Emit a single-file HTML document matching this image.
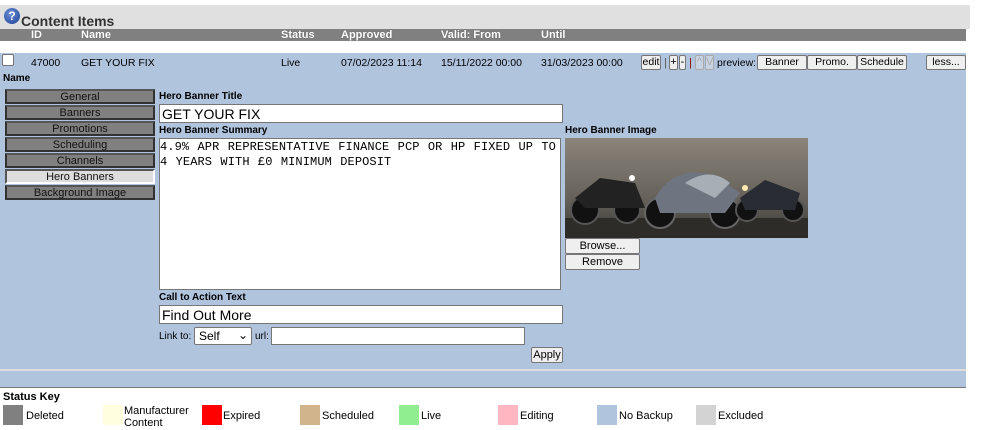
<!DOCTYPE html>
<html><head><style>
*{box-sizing:border-box}
body{margin:0;width:1001px;height:430px;background:#fff;font-family:"Liberation Sans",Arial,sans-serif;font-size:11px;position:relative;overflow:hidden;color:#000}
.a{position:absolute}
.tab{position:absolute;left:5px;width:150px;height:15px;background:#808080;border:2px solid #333;border-top-color:#555;text-align:center;font-size:11px;line-height:12px;color:#111}
.btn{position:absolute;background:#efefef;border:1px solid #767676;border-radius:2px;font-size:11px;text-align:center;line-height:12px}
.inp{position:absolute;background:#fff;border:1px solid #767676}
.sw{position:absolute;top:405px;width:20px;height:20px}
.kl{position:absolute;top:410px;font-size:11px}
</style></head><body>
<div class="a" style="left:0;top:5px;width:970px;height:24px;background:#e0e0e0"></div>
<div class="a" style="left:4px;top:8px;width:16px;height:16px;border-radius:50%;background:radial-gradient(circle at 40% 35%,#6b8fd6,#1d3f95);color:#fff;font-weight:bold;font-size:12px;text-align:center;line-height:16px">?</div>
<div class="a" style="left:21px;top:13px;font-weight:bold;font-size:14px;color:#333">Content Items</div>
<div class="a" style="left:0;top:29px;width:966px;height:12px;background:#808080;color:#fff;font-weight:bold;font-size:11px;line-height:12px;text-shadow:0 0 1px #555">
<span class="a" style="left:31px">ID</span><span class="a" style="left:81px">Name</span><span class="a" style="left:281px">Status</span><span class="a" style="left:341px">Approved</span><span class="a" style="left:441px">Valid: From</span><span class="a" style="left:541px">Until</span></div>
<div class="a" style="left:0;top:53px;width:966px;height:316px;background:#b0c4de"></div>
<div class="a" style="left:0;top:369px;width:966px;height:2px;background:#ddd"></div>
<div class="a" style="left:0;top:371px;width:966px;height:16px;background:#b0c4de"></div>
<div class="a" style="left:0;top:387px;width:966px;height:1px;background:#777"></div>
<div class="a" style="left:2px;top:54px;width:12px;height:12px;background:#fff;border:1px solid #767676;border-radius:2px"></div>
<div class="a" style="left:31px;top:57px;font-size:10.5px">47000</div>
<div class="a" style="left:81px;top:57px;font-size:10.5px">GET YOUR FIX</div>
<div class="a" style="left:281px;top:57px;font-size:10.5px">Live</div>
<div class="a" style="left:341px;top:57px;font-size:10.5px">07/02/2023 11:14</div>
<div class="a" style="left:441px;top:57px;font-size:10.5px">15/11/2022 00:00</div>
<div class="a" style="left:541px;top:57px;font-size:10.5px">31/03/2023 00:00</div>
<div class="btn" style="left:641px;top:55px;width:20px;height:15px;font-size:10.5px">edit</div>
<div class="a" style="left:664px;top:57px;color:#555">|</div>
<div class="btn" style="left:669px;top:55px;width:9px;height:15px">+</div>
<div class="btn" style="left:679px;top:55px;width:7px;height:15px">-</div>
<div class="a" style="left:689px;top:57px;color:#800">|</div>
<div class="btn" style="left:695px;top:55px;width:9px;height:15px;color:#aaa;border-color:#aaa;background:#c8d4e4">^</div>
<div class="btn" style="left:705px;top:55px;width:9px;height:15px;color:#aaa;border-color:#aaa;background:#c8d4e4">V</div>
<div class="a" style="left:717px;top:57px;font-size:10.5px">preview:</div>
<div class="btn" style="left:757px;top:55px;width:50px;height:15px;font-size:10.5px">Banner</div>
<div class="btn" style="left:807px;top:55px;width:50px;height:15px;font-size:10.5px">Promo.</div>
<div class="btn" style="left:857px;top:55px;width:50px;height:15px;font-size:10.5px">Schedule</div>
<div class="btn" style="left:926px;top:55px;width:40px;height:15px;font-size:10.5px">less...</div>
<div class="a" style="left:3px;top:73px;font-weight:bold;font-size:10px">Name</div>
<div class="tab" style="top:89px">General</div>
<div class="tab" style="top:105px">Banners</div>
<div class="tab" style="top:121px">Promotions</div>
<div class="tab" style="top:137px">Scheduling</div>
<div class="tab" style="top:153px">Channels</div>
<div class="tab" style="top:169px;background:#ddd;border-color:#555 #fff #fff #555">Hero Banners</div>
<div class="tab" style="top:185px">Background Image</div>
<div class="a" style="left:159px;top:91px;font-weight:bold;font-size:10px">Hero Banner Title</div>
<div class="inp" style="left:159px;top:104px;width:404px;height:19px;font-size:14px;padding:1px 2px">GET YOUR FIX</div>
<div class="a" style="left:159px;top:125px;font-weight:bold;font-size:10px">Hero Banner Summary</div>
<div class="inp" style="left:159px;top:138px;width:402px;height:152px;font-family:'Liberation Mono',monospace;font-size:12px;line-height:15px;padding:1px 0;letter-spacing:0.1px;word-spacing:1px">4.9% APR REPRESENTATIVE FINANCE PCP OR HP FIXED UP TO<br>4 YEARS WITH £0 MINIMUM DEPOSIT</div>
<div class="a" style="left:159px;top:292px;font-weight:bold;font-size:10px">Call to Action Text</div>
<div class="inp" style="left:159px;top:305px;width:404px;height:19px;font-size:14px;padding:1px 2px">Find Out More</div>
<div class="a" style="left:159px;top:331px;font-size:10px">Link to:</div>
<div class="inp" style="left:194px;top:327px;width:58px;height:18px;font-size:12px;padding:1px 4px;border-radius:2px">Self<span style="position:absolute;right:3px;top:0">⌄</span></div>
<div class="a" style="left:255px;top:331px;font-size:10px">url:</div>
<div class="inp" style="left:271px;top:327px;width:254px;height:18px"></div>
<div class="btn" style="left:531px;top:347px;width:32px;height:16px;line-height:14px;font-size:11px">Apply</div>
<div class="a" style="left:565px;top:125px;font-weight:bold;font-size:10px">Hero Banner Image</div>
<svg class="a" style="left:565px;top:138px" width="243" height="100" viewBox="0 0 243 100">
<defs><linearGradient id="g" x1="0" y1="0" x2="0" y2="1"><stop offset="0" stop-color="#8a847a"/><stop offset="0.6" stop-color="#66625b"/><stop offset="1" stop-color="#3a3834"/></linearGradient></defs>
<rect width="243" height="100" fill="url(#g)"/>
<rect x="0" y="80" width="243" height="20" fill="#2e2c29"/>
<ellipse cx="20" cy="72" rx="14" ry="14" fill="#111" stroke="#555" stroke-width="2"/>
<ellipse cx="62" cy="72" rx="13" ry="13" fill="#111" stroke="#555" stroke-width="2"/>
<path d="M10 60 L35 40 L70 45 L80 70 L20 70Z" fill="#222"/>
<ellipse cx="95" cy="75" rx="15" ry="15" fill="#111" stroke="#666" stroke-width="2"/>
<ellipse cx="160" cy="75" rx="15" ry="15" fill="#111" stroke="#666" stroke-width="2"/>
<path d="M90 60 Q110 25 150 38 L175 55 L160 75 L95 75Z" fill="#6e7580"/>
<path d="M120 45 Q145 28 165 45 L150 60Z" fill="#a8aeb6"/>
<ellipse cx="182" cy="72" rx="11" ry="11" fill="#111" stroke="#555" stroke-width="2"/>
<ellipse cx="228" cy="72" rx="11" ry="11" fill="#111" stroke="#555" stroke-width="2"/>
<path d="M175 60 L200 42 L235 55 L230 72 L180 72Z" fill="#2a2c33"/>
<circle cx="180" cy="50" r="3" fill="#ffe9b0"/><circle cx="67" cy="40" r="3" fill="#fff"/>
</svg>
<div class="btn" style="left:565px;top:238px;width:75px;height:16px;line-height:14px">Browse...</div>
<div class="btn" style="left:565px;top:254px;width:75px;height:16px;line-height:14px">Remove</div>
<div class="a" style="left:3px;top:391px;font-weight:bold;font-size:11px">Status Key</div>
<div class="sw" style="left:3px;background:#808080"></div><div class="kl" style="left:26px">Deleted</div>
<div class="sw" style="left:103px;background:#ffffe0"></div><div class="kl" style="left:124px;top:405px;line-height:12px">Manufacturer<br>Content</div>
<div class="sw" style="left:202px;background:#f00"></div><div class="kl" style="left:223px">Expired</div>
<div class="sw" style="left:300px;background:#d2b48c"></div><div class="kl" style="left:322px">Scheduled</div>
<div class="sw" style="left:399px;background:#90ee90"></div><div class="kl" style="left:421px">Live</div>
<div class="sw" style="left:498px;background:#ffb6c1"></div><div class="kl" style="left:520px">Editing</div>
<div class="sw" style="left:597px;background:#b0c4de"></div><div class="kl" style="left:619px">No Backup</div>
<div class="sw" style="left:696px;background:#d3d3d3"></div><div class="kl" style="left:718px">Excluded</div>
</body></html>
